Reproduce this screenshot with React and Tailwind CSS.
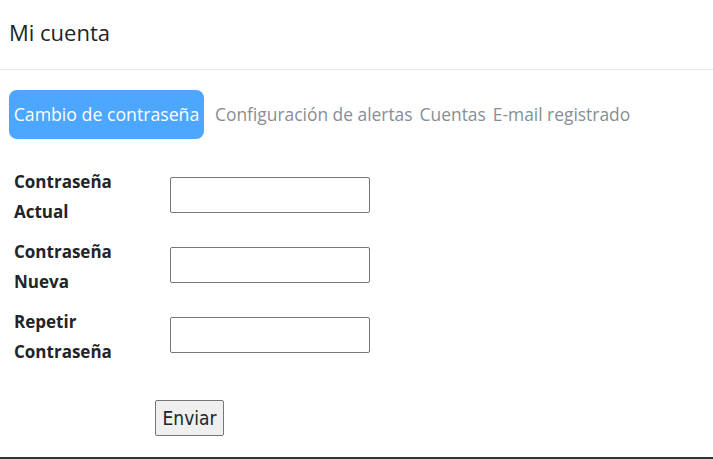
const tabs = ["Configuración de alertas", "Cuentas", "E-mail registrado"]

const fields = [
  ["Contraseña", "Actual"],
  ["Contraseña", "Nueva"],
  ["Repetir", "Contraseña"],
]

export default function App() {
  return (
    <div className="w-[713px] h-[459px] bg-white flex flex-col text-[#212529] font-['Open_Sans','Noto_Sans',sans-serif]">
      <div className="h-[70px] flex items-center pl-[9px] pb-[6px] border-b border-[#e6e6e6]">
        <h1 className="text-[22px] leading-none">Mi cuenta</h1>
      </div>

      <div className="flex items-center pl-[9px] mt-[20px] h-[49px]">
        <div className="h-[49px] w-[195px] rounded-lg bg-[#4da6ff] text-white text-[17.7px] flex items-center justify-center">
          Cambio de contraseña
        </div>
        <div className="flex gap-[7px] ml-[11px] text-[17.4px] text-[#868e96]">
          {tabs.map((t) => (
            <span key={t}>{t}</span>
          ))}
        </div>
      </div>

      <form className="flex flex-col pl-[14px] mt-[28px] gap-[10px]">
        {fields.map(([a, b], i) => (
          <div key={i} className="flex items-start">
            <label className="w-[156px] text-[17px] font-bold leading-[30px]">
              {a}
              <br />
              {b}
            </label>
            <input
              type="password"
              className="mt-[10px] w-[200px] h-[36px] border border-[#767676] rounded-[2px]"
            />
          </div>
        ))}
        <div className="pl-[141px] mt-[23px]">
          <button
            type="button"
            className="h-[36px] w-[69px] bg-[#efefef] border border-[#767676] rounded-[2px] text-[19px] font-['Liberation_Sans_Narrow','DejaVu_Sans_Condensed',sans-serif]"
          >
            Enviar
          </button>
        </div>
      </form>

      <div className="mt-auto h-[2px] bg-[#333]" />
    </div>
  )
}
